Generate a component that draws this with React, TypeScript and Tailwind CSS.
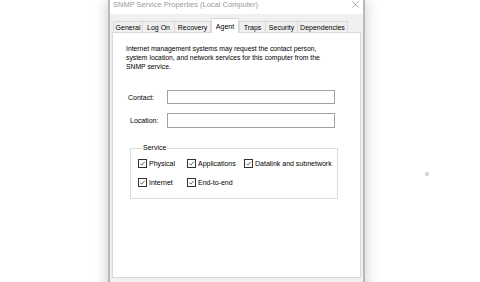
import React from 'react'

const tabs = ['General', 'Log On', 'Recovery', 'Agent', 'Traps', 'Security', 'Dependencies']
const tabWidths = ['w-[30px]', 'w-[33px]', 'w-[37px]', 'w-[28px]', 'w-[27px]', 'w-[33px]', 'w-[51px]']

function Check({ label }: { label: string }) {
  return (
    <div className="flex h-[10px] items-center gap-[2px]">
      <span className="flex h-[9px] w-[9px] shrink-0 items-center justify-center border border-[#333] bg-white">
        <svg viewBox="0 0 9 9" className="h-[9px] w-[9px]">
          <path d="M1.6 4.6 L3.6 6.6 L7.4 2.2" fill="none" stroke="#222" strokeWidth="0.9" />
        </svg>
      </span>
      <span className="whitespace-nowrap">{label}</span>
    </div>
  )
}

export default function App() {
  return (
    <div className="relative h-[282px] w-[480px] overflow-hidden bg-white font-['Liberation_Sans',Arial,sans-serif] text-[7px] leading-[9px] text-black">
      {/* dialog window */}
      <div className="absolute left-[108px] top-0 flex h-[300px] w-[257px] flex-col border-x-2 border-[#b9b9b9] bg-[#f0f0f0] shadow-[0_0_14px_rgba(0,0,0,0.22)]">
        <div className="flex h-[14px] shrink-0 items-start justify-between bg-white pl-[3px] pr-[4px] text-[7.5px] leading-[10px] text-[#9a9a9a]">
          <span>SNMP Service Properties (Local Computer)</span>
          <svg viewBox="0 0 8 8" className="mt-[1px] h-[7px] w-[7px]">
            <path d="M0.5 0.5 L7.5 7.5 M7.5 0.5 L0.5 7.5" stroke="#8a8a8a" strokeWidth="0.8" />
          </svg>
        </div>

        <div className="flex flex-col px-[2px] pt-[4px]">
          <div className="flex h-[14px] items-end pl-[1px]">
            {tabs.map((t, i) => {
              const active = t === 'Agent'
              return (
                <div
                  key={t}
                  className={
                    active
                      ? `relative z-10 -mb-px flex h-[15px] items-center justify-center border border-b-0 border-[#d9d9d9] bg-white ${tabWidths[i]}`
                      : `flex h-[11px] items-center justify-center border border-b-0 border-[#d9d9d9] bg-[#f0f0f0] ${tabWidths[i]} ${i > 0 && tabs[i - 1] !== 'Agent' ? '-ml-px' : ''}`
                  }
                >
                  <span className="whitespace-nowrap">{t}</span>
                </div>
              )
            })}
          </div>

          <div className="flex h-[246px] flex-col border border-[#d9d9d9] bg-white pl-[13px] pt-[11px]">
            <p className="w-[200px] text-[6.8px]">
              Internet management systems may request the contact person, system location, and network services for this computer from the SNMP service.
            </p>

            <div className="mt-[19px] flex items-center">
              <span className="w-[41px] pl-[2px]">Contact:</span>
              <div className="h-[14px] w-[168px] border border-[#a0a0a0] bg-white" />
            </div>
            <div className="mt-[9px] flex items-center">
              <span className="w-[41px] pl-[4px]">Location:</span>
              <div className="h-[15px] w-[168px] border border-[#a0a0a0] bg-white" />
            </div>

            <fieldset className="ml-[4px] mt-[16px] w-[208px] border border-[#dcdcdc] pb-[11px] pl-[7px] pt-[6px]">
              <legend className="ml-[4px] px-[1px] leading-[8px]">Service</legend>
              <div className="flex flex-col gap-[9px]">
                <div className="flex">
                  <div className="w-[49px]"><Check label="Physical" /></div>
                  <div className="w-[57px]"><Check label="Applications" /></div>
                  <Check label="Datalink and subnetwork" />
                </div>
                <div className="flex">
                  <div className="w-[49px]"><Check label="Internet" /></div>
                  <Check label="End-to-end" />
                </div>
              </div>
            </fieldset>
          </div>
        </div>
      </div>

      {/* stray cursor dot */}
      <div className="absolute left-[425px] top-[172px] h-[4px] w-[4px] rounded-full border border-[#b8b8c8]" />
    </div>
  )
}
